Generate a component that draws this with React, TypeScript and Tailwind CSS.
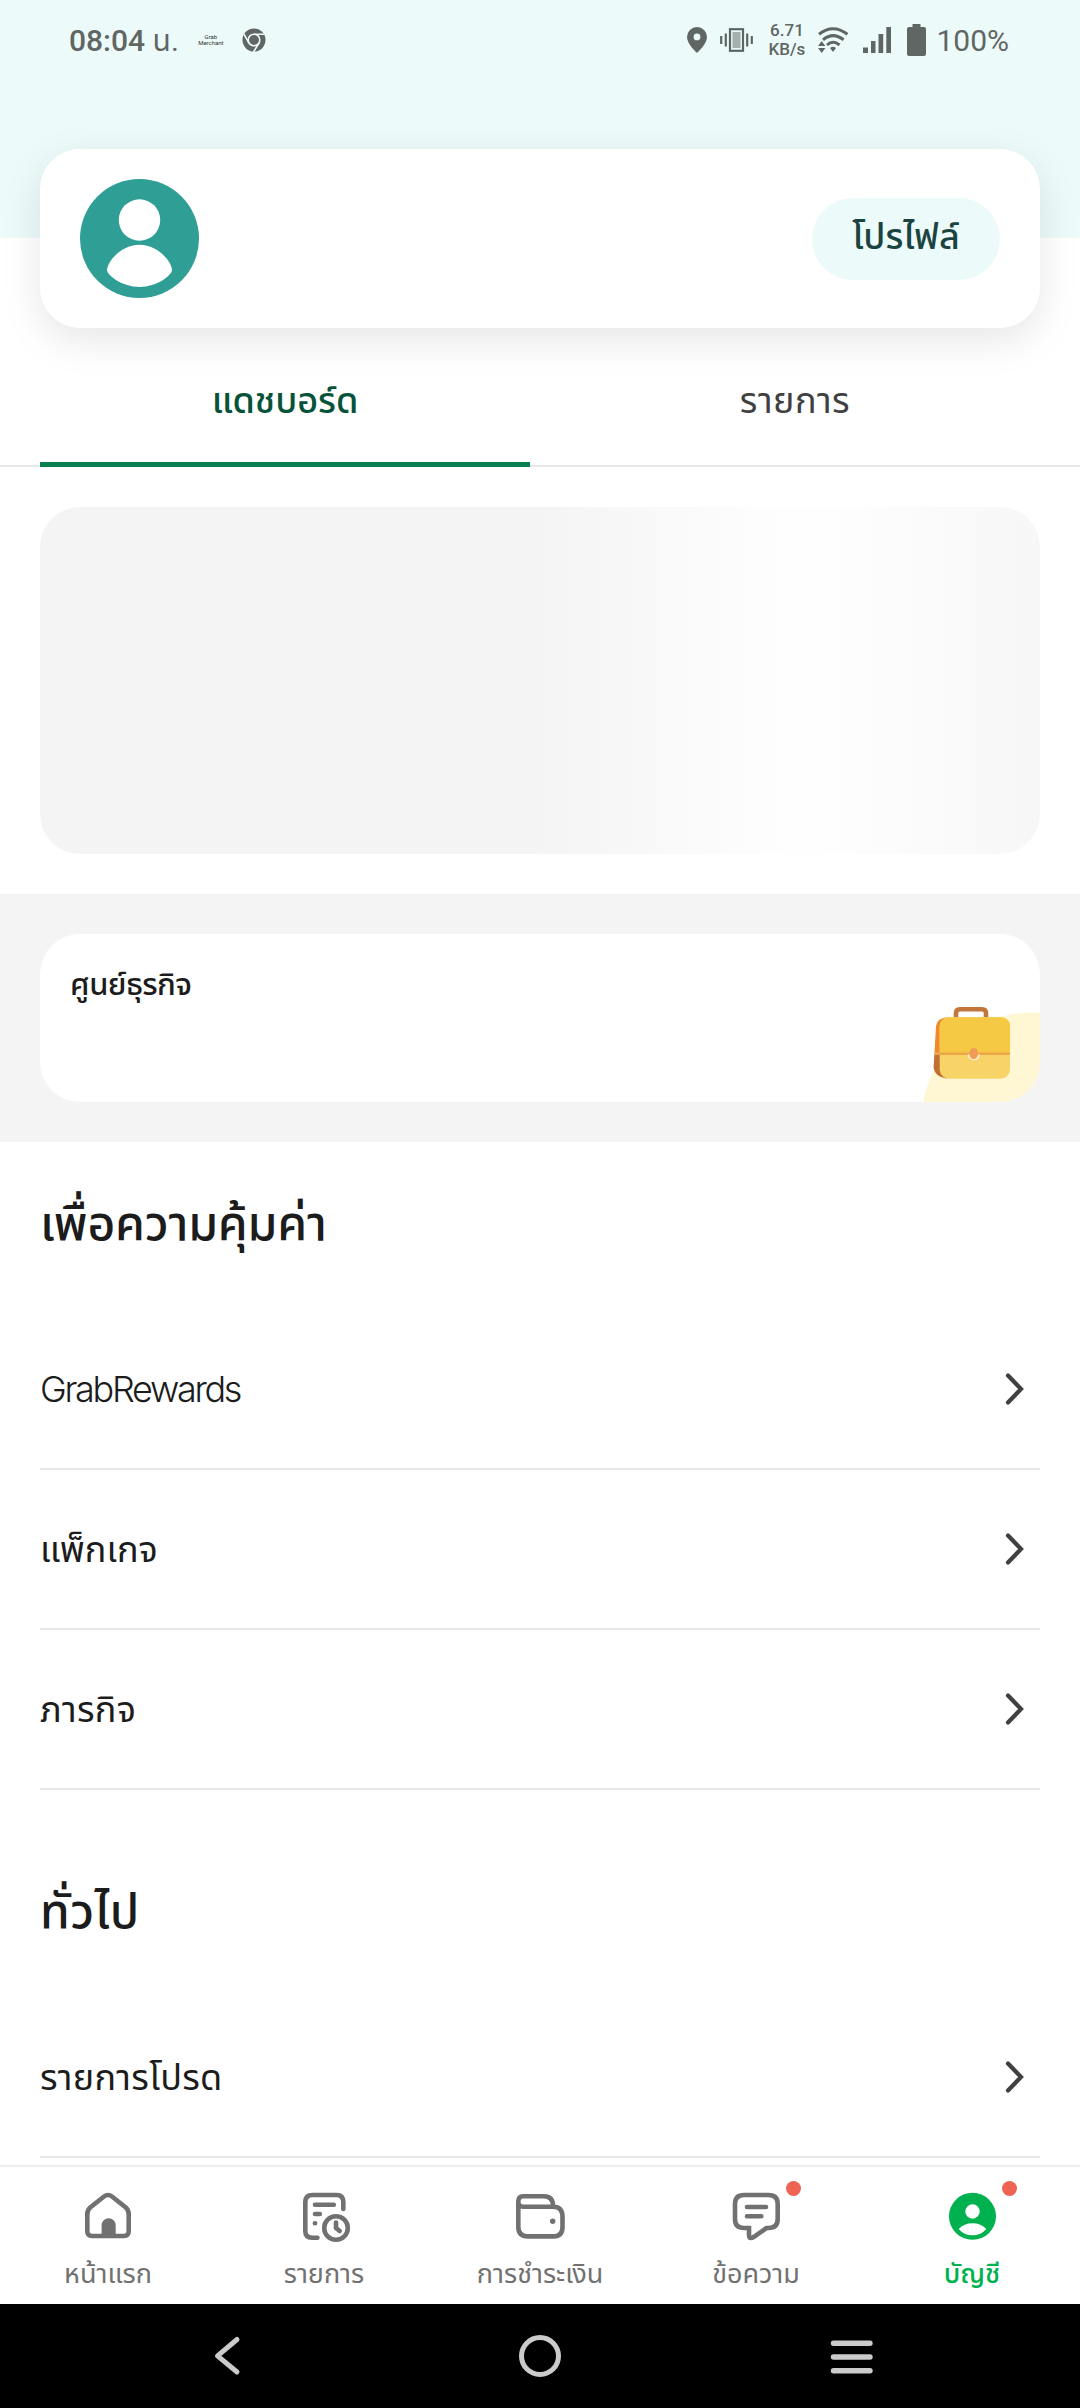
import type { ReactNode } from 'react';

const rewards = [
  { label: 'GrabRewards', className: 'font-[350] tracking-[-2.3px]' },
  { label: 'แพ็กเกจ', className: '' },
  { label: 'ภารกิจ', className: 'tracking-[0.3px]' },
];

const general = [{ label: 'รายการโปรด', className: 'tracking-[0.3px]' }];

const HomeIcon = () => (
  <svg width="60" height="60" viewBox="0 0 60 60" fill="none" stroke="currentColor" strokeWidth="4.6">
    <path d="M9.3 28Q9.3 24 12.5 21.3L26 10.5Q30 7.5 34 10.5L47.5 21.3Q50.7 24 50.7 28V45Q50.7 50 46 50H14Q9.3 50 9.3 45Z" />
    <path d="M23.6 50V39.5A7 7.3 0 0 1 37.7 39.5V50Z" fill="currentColor" stroke="none" />
  </svg>
);

const OrdersIcon = () => (
  <svg width="60" height="60" viewBox="0 0 60 60" fill="none" stroke="currentColor" strokeWidth="4.6" strokeLinecap="round" strokeLinejoin="round">
    <path d="M49.3 23V16Q49.3 9 42.5 9H18.5Q11.3 9 11.3 16V45Q11.3 51.7 18 51.7H23.4" />
    <path d="M21 18.7H39.8M21 28H25.8M20.9 37.3H21.1" />
    <circle cx="42" cy="42" r="11.8" />
    <path d="M42 36.5V42L45.7 45" />
  </svg>
);

const WalletIcon = () => (
  <svg width="60" height="60" viewBox="0 0 60 60" fill="none" stroke="currentColor" strokeWidth="4.6">
    <path d="M8.3 15.5V41Q8.3 50.4 18 50.4H43.5Q52.5 50.4 52.5 41V31Q52.5 20.7 43.5 20.7H13Q8.3 20.7 8.3 15.5Q8.3 10.2 13 10.2H34Q43 10.2 43 20" />
    <circle cx="42.7" cy="35.3" r="2.7" fill="currentColor" stroke="none" />
  </svg>
);

const MessageIcon = () => (
  <svg width="60" height="60" viewBox="0 0 60 60" fill="none" stroke="currentColor" strokeWidth="4.6" strokeLinecap="round">
    <path d="M18 9H42.5Q51.7 9 51.7 18V33Q51.7 42 42.5 42H40.5L28 50.8Q23 54 23 49V42H18Q9 42 9 33V18Q9 9 18 9Z" />
    <path d="M21 21H40M21 30.3H35.3" />
  </svg>
);

const AccountIcon = () => (
  <svg width="60" height="60" viewBox="0 0 60 60">
    <circle cx="30.5" cy="30.3" r="23.5" fill="currentColor" />
    <circle cx="30.5" cy="25.5" r="7.2" fill="#fff" />
    <path d="M16.7 43Q22 37.3 30.5 37.3Q39 37.3 44.3 43Q39 49.3 30.5 49.3Q22 49.3 16.7 43Z" fill="#fff" />
  </svg>
);

const navItems = [
  { label: 'หน้าแรก', icon: <HomeIcon />, badge: false, active: false },
  { label: 'รายการ', icon: <OrdersIcon />, badge: false, active: false },
  { label: 'การชำระเงิน', icon: <WalletIcon />, badge: false, active: false },
  { label: 'ข้อความ', icon: <MessageIcon />, badge: true, active: false },
  { label: 'บัญชี', icon: <AccountIcon />, badge: true, active: true },
];

const StatusBar = () => (
  <div className="flex h-[79px] items-center pr-[71px] pl-[69px] font-['Roboto','Noto_Sans_Thai',sans-serif] text-[#5f6664]">
    <span className="pt-[2px] text-[30px] leading-[30px] font-medium whitespace-nowrap">
      08:04 <span className="font-normal">น.</span>
    </span>
    <span className="ml-[19px] w-[26px] text-center text-[6px] leading-[6px] text-[#333]">
      Grab
      <br />
      Merchant
    </span>
    <svg className="ml-[18px]" width="24" height="24" viewBox="0 0 24 24" fill="none">
      <circle cx="12" cy="12" r="11.5" fill="currentColor" />
      <circle cx="12" cy="12" r="5.8" stroke="#edfafa" strokeWidth="1.6" />
      <path d="M12 6.2H22.5M7 15L1.8 5.8M17 15L11.5 24" stroke="#edfafa" strokeWidth="1.6" />
    </svg>
    <div className="ml-auto flex items-center">
      <svg width="20" height="26" viewBox="0 0 20 26" fill="currentColor">
        <path fillRule="evenodd" d="M10 0A10 10 0 0 0 0 10C0 17 10 26 10 26S20 17 20 10A10 10 0 0 0 10 0ZM10 6.5A3.4 3.4 0 1 1 10 13.3A3.4 3.4 0 0 1 10 6.5Z" />
      </svg>
      <svg className="ml-[13px]" width="33" height="24" viewBox="0 0 33 24" fill="none">
        <rect x="10" y="1.2" width="13" height="21.6" stroke="currentColor" strokeWidth="2.2" />
        <rect x="12.5" y="4" width="8" height="16" fill="#a5b0ae" />
        <path d="M1.2 8V16M5.8 5.5V18.5M27.2 5.5V18.5M31.8 8V16" stroke="currentColor" strokeWidth="2.2" />
      </svg>
      <div className="ml-[15px] w-[37px] pt-[1px] text-center text-[17px] leading-[19px] font-medium">
        <div>6.71</div>
        <div>KB/s</div>
      </div>
      <svg className="ml-[13px]" width="30" height="26" viewBox="0 0 30 26" fill="none" stroke="currentColor" strokeWidth="3">
        <path d="M1 7.2Q15 -3.8 29.4 7.2M5 12.8Q15 4.5 25.6 12.8M9 18Q15 12.5 21.5 18" />
        <path d="M12 21Q15 18.5 18 21L15 25Z" fill="currentColor" stroke="none" />
        <path d="M0 19L3.7 14L7.4 19ZM0 21L3.7 26L7.4 21Z" fill="currentColor" stroke="none" />
      </svg>
      <svg className="ml-[15px]" width="28" height="26" viewBox="0 0 28 26" fill="currentColor">
        <path d="M0 20.5H5V26H0ZM8 14H12.5V26H8ZM15.5 7H20.2V26H15.5ZM23.3 0H28V26H23.3Z" />
      </svg>
      <svg className="ml-[16px]" width="19" height="32" viewBox="0 0 19 32" fill="currentColor">
        <path d="M5.5 0H13.5V3H17Q19 3 19 5V30Q19 32 17 32H2Q0 32 0 30V5Q0 3 2 3H5.5Z" />
      </svg>
      <span className="ml-[10px] pt-[2px] text-[30px] leading-[30px]">100%</span>
    </div>
  </div>
);

const SectionTitle = ({ children, className }: { children: ReactNode; className: string }) => (
  <h2 className={`pb-[57px] text-[48px] leading-[60px] font-medium ${className}`}>{children}</h2>
);

const MenuRow = ({ label, className }: { label: string; className: string }) => (
  <button className="flex h-[160px] w-full items-center justify-between border-b-2 border-[#e8e8e8] text-left">
    <span className={`text-[36px] leading-[48px] ${className}`}>{label}</span>
    <svg className="mr-[15px]" width="20" height="34" viewBox="0 0 20 34" fill="none" stroke="#404040" strokeWidth="4.2" strokeLinecap="round">
      <path d="M3 3.5L16 17L3 30.5" />
    </svg>
  </button>
);

const BusinessCard = () => (
  <section className="bg-[#f4f4f4] px-10 py-10">
    <div className="flex h-[168px] justify-between overflow-hidden rounded-[40px] bg-white pl-[30px]">
      <span className="pt-[28px] text-[31px] leading-[44px] font-medium tracking-[-0.6px]">ศูนย์ธุรกิจ</span>
      <svg className="self-end" width="120" height="100" viewBox="0 0 120 100" fill="none">
        <circle cx="110" cy="119" r="108.4" fill="#fff6d3" />
        <path d="M36 17V11Q36 7.2 40 7.2H62Q66 7.2 66 11V17" stroke="#c2763c" strokeWidth="4.6" />
        <path d="M28 15.3Q17 16 16 24L14.5 50.5H22V20Z" fill="#f0882c" />
        <path d="M14.5 50.5L13.6 66Q15 75 27 76.7L22 50.5Z" fill="#c07030" />
        <rect x="19.7" y="15.3" width="70.3" height="61.4" rx="9.5" fill="#f8d368" />
        <path d="M19.7 51.7V24.8Q19.7 15.3 29.2 15.3H80.5Q90 15.3 90 24.8V51.7Z" fill="#f6c944" />
        <path d="M15 51.7H90" stroke="#eea648" strokeWidth="2.4" />
        <path d="M48.5 52.5A5.3 5.6 0 0 0 59 52.5" stroke="#fff0d0" strokeWidth="2" />
        <ellipse cx="53.7" cy="51.5" rx="4.3" ry="5.7" fill="#f09c58" />
      </svg>
    </div>
  </section>
);

const BottomNav = () => (
  <nav className="flex h-[139px] shrink-0 border-t-2 border-[#ebefef] bg-white">
    {navItems.map(item => (
      <button
        key={item.label}
        className={`flex w-[216px] flex-col items-center pt-[19px] ${item.active ? 'font-medium text-[#00b14f]' : 'text-[#717171]'}`}
      >
        <span className="relative">
          {item.icon}
          {item.badge && <span className="absolute -top-[5px] left-[60px] size-[15px] rounded-full bg-[#ee6352]" />}
        </span>
        <span className="mt-[10px] text-[27px] leading-[36px] whitespace-nowrap">{item.label}</span>
      </button>
    ))}
  </nav>
);

const SystemNav = () => (
  <div className="flex h-[104px] shrink-0 items-center justify-between bg-black px-[206px]">
    <svg width="44" height="44" viewBox="0 0 44 44" fill="none" stroke="#cbcbcb" strokeWidth="5" strokeLinecap="round" strokeLinejoin="round">
      <path d="M31 5.5L11.5 21.8L31 38" />
    </svg>
    <svg width="44" height="44" viewBox="0 0 44 44" fill="none" stroke="#cbcbcb" strokeWidth="5">
      <circle cx="22" cy="22" r="18.5" />
    </svg>
    <svg width="44" height="44" viewBox="0 0 44 44" fill="none" stroke="#cbcbcb" strokeWidth="5.4" strokeLinecap="round">
      <path d="M3.5 9.3H40M3.5 23H40M3.5 36.7H40" />
    </svg>
  </div>
);

export default function App() {
  return (
    <div className="flex h-[2408px] w-[1080px] flex-col overflow-hidden bg-white font-['Inter','Noto_Sans_Thai',sans-serif] text-[#1c1c1c]">
      <div className="h-[238px] shrink-0 bg-[#edfafa]">
        <StatusBar />
      </div>
      <main className="min-h-0 flex-1">
        <div className="mx-10 -mt-[89px] flex h-[179px] items-center justify-between rounded-[40px] bg-white px-10 shadow-[0_12px_40px_rgba(0,0,0,0.1)]">
          <svg width="119" height="119" viewBox="0 0 119 119">
            <circle cx="59.5" cy="59.5" r="59.5" fill="#2f9f95" />
            <circle cx="59.5" cy="41" r="20.7" fill="#fff" />
            <path d="M27 91C27 84 40 65.7 59.5 65.7S92 84 92 91C92 96 77 108 59.5 108S27 96 27 91Z" fill="#fff" />
          </svg>
          <button className="h-[82px] w-[188px] rounded-full bg-[#edfafa] pb-[6px] text-[36px] leading-[76px] font-medium whitespace-nowrap text-[#1b4440]">
            โปรไฟล์
          </button>
        </div>

        <div className="flex h-[139px] gap-5 border-b-2 border-[#e8e8e8] px-10 text-[36px] leading-[50px]">
          <button className="-mb-[2px] flex-1 border-b-5 border-[#08804f] pt-[10px] font-medium text-[#07533a]">แดชบอร์ด</button>
          <button className="-mb-[2px] flex-1 border-b-5 border-transparent pt-[10px] tracking-[0.5px] text-[#404040]">รายการ</button>
        </div>

        <div className="px-10 py-10">
          <div className="h-[347px] rounded-[40px] bg-linear-[90deg,#f4f4f4_49%,#fefefe_75%,#fefefe_78%,#f7f7f7_100%]" />
        </div>

        <BusinessCard />

        <div className="px-10">
          <SectionTitle className="pt-[51px] tracking-[-0.2px]">เพื่อความคุ้มค่า</SectionTitle>
          {rewards.map(row => (
            <MenuRow key={row.label} {...row} />
          ))}
          <SectionTitle className="pt-[91px] tracking-[0.5px]">ทั่วไป</SectionTitle>
          {general.map(row => (
            <MenuRow key={row.label} {...row} />
          ))}
        </div>
      </main>
      <BottomNav />
      <SystemNav />
    </div>
  );
}
